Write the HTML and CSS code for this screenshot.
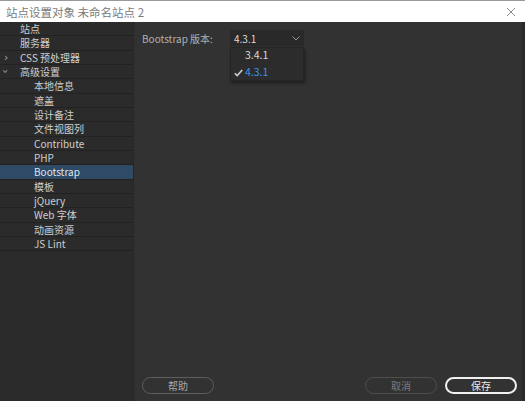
FILE: index.html
```html
<!DOCTYPE html>
<html>
<head>
<meta charset="utf-8">
<link rel="stylesheet" href="styles.css">
</head>
<body>
<div class="window">
  <div class="titlebar">
    <span class="title">站点设置对象 未命名站点 2</span>
    <svg class="close" width="10" height="10" viewBox="0 0 10 10"><path d="M1 1L9 9M9 1L1 9" stroke="#8a8a8a" stroke-width="1" fill="none"/></svg>
  </div>
  <div class="body">
    <div class="sidebar">
      <div class="row l1">站点</div>
      <div class="row l1">服务器</div>
      <div class="row l1"><span class="arrow">›</span>CSS 预处理器</div>
      <div class="row l1"><span class="arrow down">›</span>高级设置</div>
      <div class="row l2">本地信息</div>
      <div class="row l2">遮盖</div>
      <div class="row l2">设计备注</div>
      <div class="row l2">文件视图列</div>
      <div class="row l2">Contribute</div>
      <div class="row l2">PHP</div>
      <div class="row l2 sel">Bootstrap</div>
      <div class="row l2">模板</div>
      <div class="row l2">jQuery</div>
      <div class="row l2">Web 字体</div>
      <div class="row l2">动画资源</div>
      <div class="row l2">JS Lint</div>
    </div>
    <div class="main">
      <div class="field">
        <span class="label">Bootstrap 版本:</span>
        <div class="selectwrap">
          <div class="select"><span>4.3.1</span>
            <svg width="8" height="5" viewBox="0 0 8 5"><path d="M0.5 0.5L4 4L7.5 0.5" stroke="#9a9a9a" fill="none"/></svg>
          </div>
          <div class="menu">
            <div class="opt">3.4.1</div>
            <div class="opt on"><svg class="check" width="9" height="8" viewBox="0 0 9 8"><path d="M0.8 4.2L3.2 6.6L8.2 1" stroke="#d0d0d0" stroke-width="1.6" fill="none"/></svg>4.3.1</div>
          </div>
        </div>
      </div>
      <div class="spacer"></div>
      <div class="footer">
        <button class="btn">帮助</button>
        <div class="grow"></div>
        <button class="btn dim">取消</button>
        <button class="btn primary">保存</button>
      </div>
    </div>
  </div>
</div>
</body>
</html>
```
FILE: styles.css
```css
* { box-sizing: border-box; }
html, body { margin: 0; padding: 0; }
body {
  width: 525px; height: 401px; overflow: hidden;
  background: #323232;
  font-family: "Noto Sans CJK SC", "Noto Sans", sans-serif;
  font-size: 10px;
  color: #c8c8c8;
}
.window { display: flex; flex-direction: column; height: 401px; }
.titlebar {
  height: 22px; background: #ffffff;
  border-top: 1px solid #9a9a9a;
  display: flex; align-items: center; padding: 0 9px 0 6px;
  flex: none;
}
.title { color: #7a7a7a; font-size: 11.5px; flex: 1; }
.close { display: block; }
.body { flex: 1; display: flex; min-height: 0; }
.sidebar {
  width: 134px; background: #2b2b2b;
  border-right: 1px solid #262626;
  flex: none;
}
.row {
  height: 14.33px; line-height: 13px;
  border-bottom: 1px solid #222222;
  color: #cfcfcf; font-size: 10px;
  position: relative; white-space: nowrap;
}
.l1 { padding-left: 20px; }
.l2 { padding-left: 34px; }
.sel { background: #2e4a66; color: #dde4ec; }
.arrow {
  position: absolute; left: 4px; top: 0; color: #a8a8a8; font-size: 11px;
  font-family: "DejaVu Sans", sans-serif;
}
.arrow.down { transform: rotate(90deg); left: 3px; top: 0; }
.main {
  flex: 1; display: flex; flex-direction: column;
  padding: 8px 5px 7px 8px;
  border-right: 3px solid #2a2a2a;
}
.field { display: flex; align-items: flex-start; }
.label { color: #b0b0b0; font-size: 10px; margin-top: 1px; width: 88px; }
.selectwrap { display: flex; flex-direction: column; width: 74px; }
.select {
  height: 16px; background: #292929; border-radius: 2px;
  display: flex; align-items: center; justify-content: space-between;
  padding: 0 4px 0 4px; color: #dcdcdc; font-size: 10px;
}
.menu {
  margin-top: 1px; background: #2c2c2c;
  border: 1px solid #252525; box-shadow: 1px 2px 3px rgba(0,0,0,0.45);
  padding: 0;
  height: 34px;
}
.opt {
  height: 16px; line-height: 14px; padding-left: 14px; font-size: 10.5px; color: #d8d8d8;
  position: relative;
}
.opt.on { color: #3d94e6; margin-top: 1px; }
.check { position: absolute; left: 3px; top: 4px; }
.spacer { flex: 1; }
.footer { display: flex; align-items: center; gap: 8px; }
.grow { flex: 1; }
.btn {
  width: 72px; height: 17px; border-radius: 9px;
  background: transparent; border: 1.5px solid #5e5e5e;
  color: #a8a8a8; font-family: inherit; font-size: 10px; padding: 0; line-height: 13px;
}
.btn.dim { border-color: #4e4e4e; color: #7a7a7a; }
.btn.primary { border: 2px solid #f0f0f0; color: #e8e8e8; }
```
